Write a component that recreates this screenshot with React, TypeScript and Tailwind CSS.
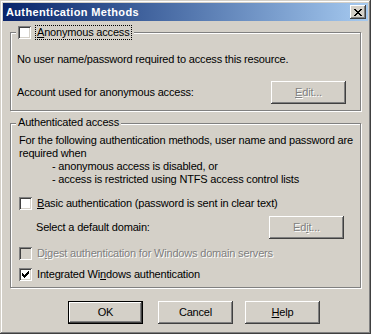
import type { ReactNode } from "react";

const FONT = "font-['Liberation_Sans',Arial,sans-serif]";

const raised =
  "shadow-[inset_-1px_-1px_0_#404040,inset_1px_1px_0_#ffffff,inset_-2px_-2px_0_#808080,inset_2px_2px_0_#d4d0c8]";

const Checkbox = ({ checked = false, disabled = false }: { checked?: boolean; disabled?: boolean }) => (
  <span
    className={`flex h-[13px] w-[13px] shrink-0 items-center justify-center ${
      disabled ? "bg-[#d4d0c8]" : "bg-white"
    } shadow-[inset_1px_1px_0_#808080,inset_-1px_-1px_0_#ffffff,inset_2px_2px_0_#404040,inset_-2px_-2px_0_#d4d0c8]`}
  >
    {checked && (
      <svg width="7" height="7" viewBox="0 0 7 7" shapeRendering="crispEdges">
        <path d="M0 2h1v3H0zM1 3h1v3H1zM2 4h1v3H2zM3 3h1v3H3zM4 2h1v3H4zM5 1h1v3H5zM6 0h1v3H6z" fill="#000" />
      </svg>
    )}
  </span>
);

const Button = ({ children, isDefault = false, disabled = false }: { children: ReactNode; isDefault?: boolean; disabled?: boolean }) => (
  <div
    className={`flex h-[23px] w-[75px] items-center justify-center bg-[#d4d0c8] text-[11px] ${raised} ${
      isDefault ? "outline outline-1 outline-black -outline-offset-1 shadow-[inset_-2px_-2px_0_#404040,inset_2px_2px_0_#ffffff,inset_-3px_-3px_0_#808080]" : ""
    } ${disabled ? "text-[#808080] [text-shadow:1px_1px_0_#ffffff]" : "text-black"}`}
  >
    {children}
  </div>
);

const GroupBox = ({ legend, className, children }: { legend: ReactNode; className: string; children: ReactNode }) => (
  <div className={`relative border border-[#808080] shadow-[inset_1px_1px_0_#ffffff,1px_1px_0_#ffffff] ${className}`}>
    <div className="absolute left-[5px] top-[-8px] flex items-center bg-[#d4d0c8] px-[2px]">{legend}</div>
    {children}
  </div>
);

export default function App() {
  return (
    <div
      className={`${FONT} flex h-[334px] w-[371px] flex-col bg-[#d4d0c8] p-[3px] text-[11px] leading-[13px] tracking-[-0.18px] text-black shadow-[inset_-1px_-1px_0_#404040,inset_1px_1px_0_#d4d0c8,inset_-2px_-2px_0_#808080,inset_2px_2px_0_#ffffff]`}
    >
      {/* Title bar */}
      <div className="flex h-[18px] items-center justify-between bg-gradient-to-r from-[#0a246a] to-[#a6caf0] pl-[3px] pr-[2px]">
        <span className="text-[11px] font-bold tracking-[0.35px] text-white">Authentication Methods</span>
        <div className={`flex h-[14px] w-[16px] items-center justify-center bg-[#d4d0c8] ${raised}`}>
          <svg width="8" height="7" viewBox="0 0 8 7" shapeRendering="crispEdges">
            <path d="M0 0h2v1H0zM6 0h2v1H6zM1 1h2v1H1zM5 1h2v1H5zM2 2h4v1H2zM3 3h2v1H3zM2 4h4v1H2zM1 5h2v1H1zM5 5h2v1H5zM0 6h2v1H0zM6 6h2v1H6z" fill="#000" />
          </svg>
        </div>
      </div>

      <div className="flex flex-1 flex-col px-[7px] pt-[11px]">
        {/* Anonymous access */}
        <GroupBox
          className="h-[79px]"
          legend={
            <div className="flex items-center gap-[4px]">
              <Checkbox />
              <span className="border border-dotted border-black px-[1px]">
                <u>A</u>nonymous access
              </span>
            </div>
          }
        >
          <div className="flex flex-col px-[6px] pt-[20px]">
            <span>No user name/password required to access this resource.</span>
            <div className="mt-[15px] flex items-center justify-between pr-[8px]">
              <span>Account used for anonymous access:</span>
              <Button disabled>
                <u>E</u>dit...
              </Button>
            </div>
          </div>
        </GroupBox>

        {/* Authenticated access */}
        <GroupBox className="mt-[12px] h-[165px]" legend={<span>Authenticated access</span>}>
          <div className="flex flex-col whitespace-nowrap px-[8px] pt-[10px]">
            <span>For the following authentication methods, user name and password are</span>
            <span>required when</span>
            <span className="pl-[33px]">- anonymous access is disabled, or</span>
            <span className="pl-[33px]">- access is restricted using NTFS access control lists</span>

            <div className="mt-[11px] flex items-center gap-[5px]">
              <Checkbox />
              <span>
                <u>B</u>asic authentication (password is sent in clear text)
              </span>
            </div>
            <div className="mt-[6px] flex items-center justify-between pl-[17px] pr-[8px]">
              <span>Select a default domain:</span>
              <Button disabled>
                Ed<u>i</u>t...
              </Button>
            </div>
            <div className="mt-[8px] flex items-center gap-[5px] text-[#808080] [text-shadow:1px_1px_0_#ffffff]">
              <Checkbox disabled />
              <span>
                D<u>i</u>gest authentication for Windows domain servers
              </span>
            </div>
            <div className="mt-[8px] flex items-center gap-[5px]">
              <Checkbox checked />
              <span>
                Integrated Wi<u>n</u>dows authentication
              </span>
            </div>
          </div>
        </GroupBox>

        {/* Buttons */}
        <div className="mt-[13px] flex pl-[58px]">
          <Button isDefault>OK</Button>
          <div className="ml-[15px]">
            <Button>Cancel</Button>
          </div>
          <div className="ml-[12px]">
            <Button>
              <u>H</u>elp
            </Button>
          </div>
        </div>
      </div>
    </div>
  );
}
